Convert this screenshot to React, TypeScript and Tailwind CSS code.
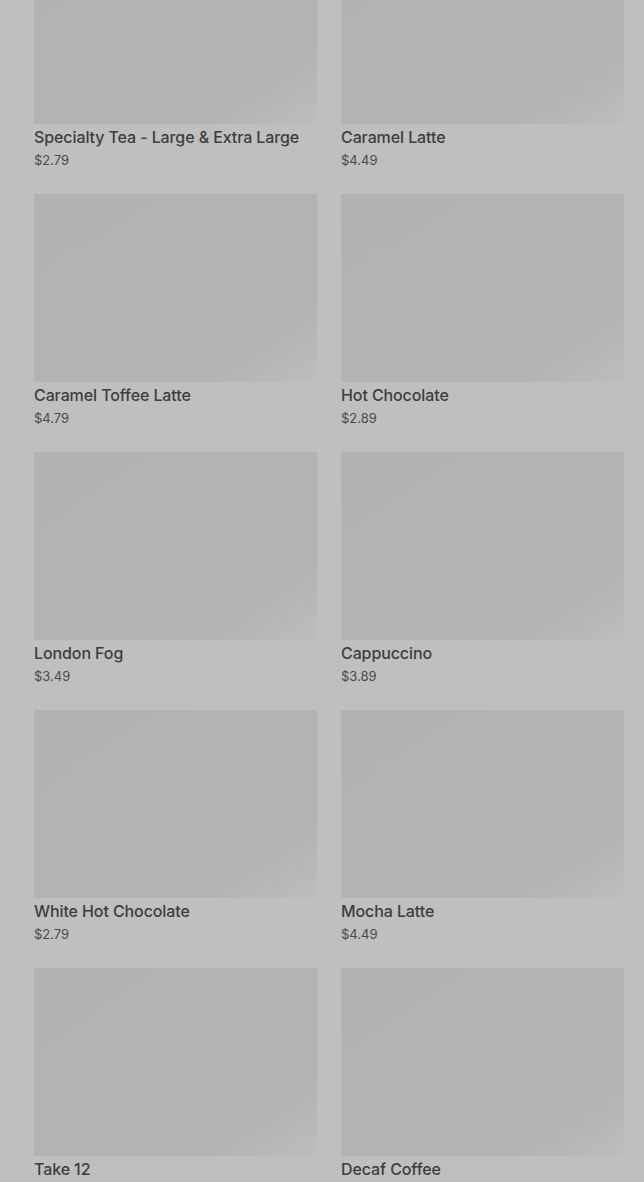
const ITEMS = [
  { name: 'Specialty Tea - Large & Extra Large', price: '$2.79' },
  { name: 'Caramel Latte', price: '$4.49' },
  { name: 'Caramel Toffee Latte', price: '$4.79' },
  { name: 'Hot Chocolate', price: '$2.89' },
  { name: 'London Fog', price: '$3.49' },
  { name: 'Cappuccino', price: '$3.89' },
  { name: 'White Hot Chocolate', price: '$2.79' },
  { name: 'Mocha Latte', price: '$4.49' },
  { name: 'Take 12', price: '$2.49' },
  { name: 'Decaf Coffee', price: '$2.29' },
]

export default function App() {
  return (
    <div
      className="h-[1182px] overflow-hidden bg-[#bfbfbf]"
      style={{ fontFamily: 'Inter, Roboto, "Noto Sans", sans-serif' }}
    >
      {/* menu grid — page is scrolled a little past the top */}
      <div className="-mt-16 grid grid-cols-2 gap-x-6 gap-y-6 pl-[34px] pr-5">
        {ITEMS.map((item) => (
          <div key={item.name} className="flex flex-col">
            <div className="h-[188px] bg-gradient-to-br from-[#b2b2b2] via-[#b3b3b3] via-80% to-[#bdbdbd]" />
            <p className="pt-[2px] text-base font-medium leading-[22px] tracking-[-0.1px] text-[#3d3d3d]">{item.name}</p>
            <p className="pt-[2px] text-[13px] leading-[20px] text-[#4a4a4a]">{item.price}</p>
          </div>
        ))}
      </div>
    </div>
  )
}
